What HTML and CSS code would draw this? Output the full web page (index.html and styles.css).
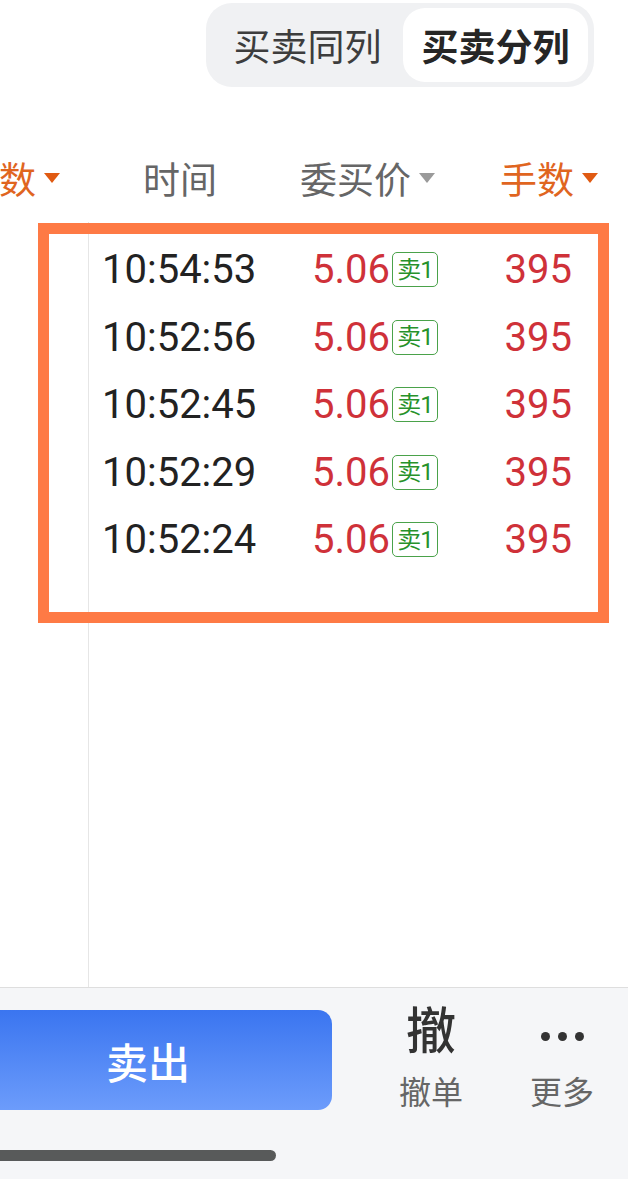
FILE: index.html
```html
<!DOCTYPE html>
<html lang="zh-CN">
<head>
<meta charset="utf-8">
<title>成交明细</title>
<link rel="stylesheet" href="styles.css">
</head>
<body>
<div class="page">
  <div class="top">
    <div class="toggle">
      <div class="seg seg-same">买卖同列</div>
      <div class="seg seg-split active">买卖分列</div>
    </div>
  </div>

  <div class="head">
    <div class="h h-left orange">数<span class="tri"></span></div>
    <div class="h h-time">时间</div>
    <div class="h h-price">委买价<span class="tri grey"></span></div>
    <div class="h h-qty orange">手数<span class="tri"></span></div>
  </div>

  <div class="main">
    <div class="side"></div>
    <div class="list">
      <div class="row"><div class="time">10:54:53</div><div class="price">5.06<span class="badge">卖1</span></div><div class="qty">395</div></div>
      <div class="row"><div class="time">10:52:56</div><div class="price">5.06<span class="badge">卖1</span></div><div class="qty">395</div></div>
      <div class="row"><div class="time">10:52:45</div><div class="price">5.06<span class="badge">卖1</span></div><div class="qty">395</div></div>
      <div class="row"><div class="time">10:52:29</div><div class="price">5.06<span class="badge">卖1</span></div><div class="qty">395</div></div>
      <div class="row"><div class="time">10:52:24</div><div class="price">5.06<span class="badge">卖1</span></div><div class="qty">395</div></div>
    </div>
  </div>

  <div class="bottom">
    <div class="actions">
      <div class="sell">卖出</div>
      <div class="act act-cancel">
        <div class="act-icon">撤</div>
        <div class="act-label">撤单</div>
      </div>
      <div class="act act-more">
        <div class="act-icon dots"><i></i><i></i><i></i></div>
        <div class="act-label">更多</div>
      </div>
    </div>
    <div class="home"></div>
  </div>

  <div class="highlight"></div>
</div>
</body>
</html>
```

FILE: styles.css
```css
* { box-sizing: border-box; }

html, body {
  margin: 0;
  padding: 0;
  background: #ffffff;
}

body {
  font-family: Roboto, "Noto Sans CJK SC", sans-serif;
  color: #222;
}

.page {
  position: relative;
  width: 628px;
  height: 1179px;
  overflow: hidden;
  background: #ffffff;
}

/* top toggle */
.top {
  height: 134px;
  display: flex;
  justify-content: flex-end;
  align-items: flex-start;
  padding: 3px 34px 0 0;
}

.toggle {
  display: flex;
  height: 84px;
  padding: 5px 6px;
  background: #f0f1f3;
  border-radius: 26px;
}

.seg {
  height: 74px;
  display: flex;
  align-items: center;
  justify-content: center;
  font-size: 37px;
  color: #3d3d3d;
  border-radius: 22px;
}

.seg-same { width: 191px; }
.seg-split { width: 185px; }

.seg.active {
  background: #ffffff;
  color: #262626;
  font-weight: 700;
}

/* header */
.head {
  height: 88px;
  display: grid;
  grid-template-columns: 88px 184px 198px 1fr;
  align-items: center;
  font-size: 37px;
  color: #666666;
}

.h {
  display: flex;
  align-items: center;
  white-space: nowrap;
}

.h-left {
  justify-content: flex-end;
  padding-right: 28px;
  overflow: hidden;
}

.h-time { justify-content: center; }
.h-price { padding-left: 28px; }
.h-qty { padding-left: 30px; }

.orange { color: #e0651f; }

.tri {
  display: inline-block;
  width: 0;
  height: 0;
  margin-left: 8px;
  border-left: 8px solid transparent;
  border-right: 8px solid transparent;
  border-top: 10px solid #e05a12;
}

.tri.grey { border-top-color: #9a9a9a; }

/* main list */
.main {
  height: 765px;
  display: flex;
}

.side {
  width: 88px;
  flex: none;
}

.list {
  flex: 1;
  border-left: 1px solid #e6e6e6;
  padding-top: 14px;
}

.row {
  height: 67.5px;
  display: grid;
  grid-template-columns: 223px auto 1fr;
  align-items: center;
  font-size: 40px;
}

.time {
  padding-left: 13px;
  color: #222222;
}

.price {
  display: flex;
  align-items: center;
  color: #cf3139;
}

.badge {
  width: 46px;
  height: 35px;
  margin-left: 2px;
  display: flex;
  align-items: center;
  justify-content: center;
  border: 1px solid #4aa24a;
  border-radius: 5px;
  color: #27922a;
  font-size: 24px;
  line-height: 1;
  letter-spacing: -1px;
}

.qty {
  text-align: right;
  padding-right: 56px;
  color: #cf3139;
}

/* bottom bar */
.bottom {
  height: 192px;
  border-top: 1px solid #dedede;
  background: #f5f6f8;
  padding-top: 18px;
}

.actions {
  display: flex;
  align-items: flex-start;
}

.sell {
  flex: none;
  width: 368px;
  height: 100px;
  margin-left: -36px;
  margin-top: 4px;
  border-radius: 14px;
  background: linear-gradient(180deg, #3a75f0 0%, #6c9cfb 100%);
  color: #ffffff;
  font-size: 42px;
  font-weight: 500;
  display: flex;
  align-items: center;
  justify-content: center;
}

.act {
  display: flex;
  flex-direction: column;
  align-items: center;
}

.act-cancel { width: 130px; margin-left: 34px; }
.act-more { width: 132px; }

.act-icon {
  height: 52px;
  font-size: 50px;
  line-height: 52px;
  font-weight: 500;
  color: #333333;
}

.dots {
  display: flex;
  align-items: center;
  justify-content: center;
  gap: 8px;
  padding-top: 8px;
}

.dots i {
  display: block;
  width: 9px;
  height: 9px;
  border-radius: 50%;
  background: #333333;
}

.act-label {
  margin-top: 17px;
  font-size: 32px;
  line-height: 36px;
  color: #666666;
}

.home {
  width: 286px;
  height: 11px;
  margin-left: -10px;
  margin-top: 39px;
  border-radius: 6px;
  background: #585a5a;
}

/* annotation overlay */
.highlight {
  position: absolute;
  left: 38px;
  top: 223px;
  width: 571px;
  height: 400px;
  border: 11px solid #fe7a45;
  pointer-events: none;
}
```
